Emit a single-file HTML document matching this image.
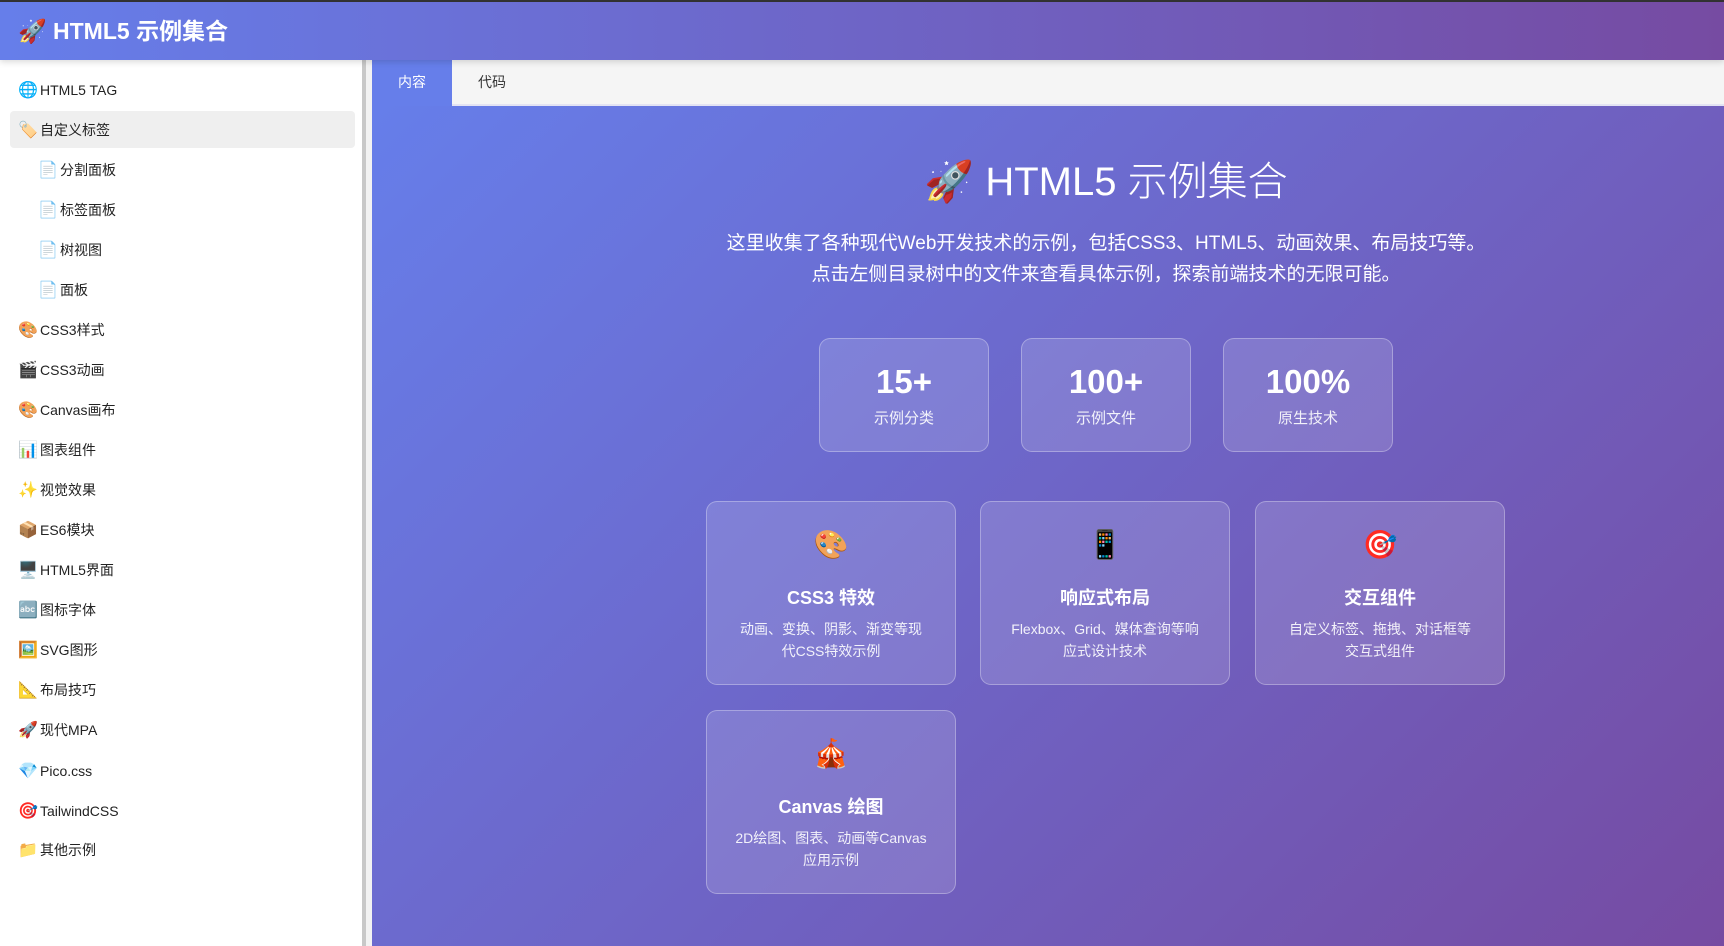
<!DOCTYPE html>
<html><head><meta charset="utf-8"><style>
*{box-sizing:border-box;margin:0;padding:0}
body{width:1724px;height:946px;overflow:hidden;font-family:"Liberation Sans","Noto Sans CJK SC",sans-serif;background:#fff;position:relative}
.top{position:absolute;left:0;top:0;width:1724px;height:2px;background:#333}
.hdr{position:absolute;left:0;top:2px;width:1724px;height:58px;background:linear-gradient(90deg,#667eea,#764ba2);color:#fff;font-weight:bold;font-size:23px;line-height:58px;padding-left:18px;box-shadow:0 2px 6px rgba(0,0,0,.15);z-index:2}
.side{position:absolute;left:0;top:60px;width:362px;height:886px;background:#fff}
.div{position:absolute;left:362px;top:60px;width:4px;height:886px;background:#c8c8c8}
.div2{position:absolute;left:366px;top:60px;width:6px;height:886px;background:#f2f2f2}
.it{position:absolute;left:18px;font-size:14px;color:#222;height:24px;line-height:24px;white-space:nowrap}
.it i{font-style:normal;display:inline-block;width:22px;font-size:16px}
.sel{position:absolute;left:10px;top:111px;width:345px;height:37px;background:#efefef;border-radius:4px}
.main{position:absolute;left:372px;top:106px;width:1352px;height:840px;background:linear-gradient(135deg,#667eea,#764ba2)}
.tabs{position:absolute;left:372px;top:60px;width:1352px;height:46px;background:#f5f5f5;border-bottom:2px solid #e3e3f3}
.tab{position:absolute;top:0;height:46px;line-height:44px;font-size:14px;text-align:center;width:80px}
.c{position:absolute;color:#fff;text-align:center}
.card{position:absolute;background:rgba(255,255,255,.14);border:1px solid rgba(255,255,255,.3);border-radius:11px;color:#fff;text-align:center}
.stat{width:170px;height:114px;top:338px}
.stat b{display:block;font-size:33px;margin-top:25px;line-height:36px}
.stat span{display:block;font-size:15px;margin-top:7px;opacity:.9}
.f{width:250px;height:184px}
.f .ic{font-size:28px;margin-top:26px;line-height:34px}
.f b{display:block;font-size:18px;margin-top:22px}
.f p{font-size:14px;line-height:22px;margin:8px 28px 0;opacity:.9}
</style></head><body>
<div class="top"></div>
<div class="hdr">🚀 HTML5 示例集合</div>
<div class="side">
<div class="sel" style="top:51px"></div>
</div>
<div class="it" style="top:78px"><i>🌐</i>HTML5 TAG</div>
<div class="it" style="top:118px"><i>🏷️</i>自定义标签</div>
<div class="it" style="top:158px;left:38px"><i>📄</i>分割面板</div>
<div class="it" style="top:198px;left:38px"><i>📄</i>标签面板</div>
<div class="it" style="top:238px;left:38px"><i>📄</i>树视图</div>
<div class="it" style="top:278px;left:38px"><i>📄</i>面板</div>
<div class="it" style="top:318px"><i>🎨</i>CSS3样式</div>
<div class="it" style="top:358px"><i>🎬</i>CSS3动画</div>
<div class="it" style="top:398px"><i>🎨</i>Canvas画布</div>
<div class="it" style="top:438px"><i>📊</i>图表组件</div>
<div class="it" style="top:478px"><i>✨</i>视觉效果</div>
<div class="it" style="top:518px"><i>📦</i>ES6模块</div>
<div class="it" style="top:558px"><i>🖥️</i>HTML5界面</div>
<div class="it" style="top:598px"><i>🔤</i>图标字体</div>
<div class="it" style="top:638px"><i>🖼️</i>SVG图形</div>
<div class="it" style="top:678px"><i>📐</i>布局技巧</div>
<div class="it" style="top:718px"><i>🚀</i>现代MPA</div>
<div class="it" style="top:759px"><i>💎</i>Pico.css</div>
<div class="it" style="top:799px"><i>🎯</i>TailwindCSS</div>
<div class="it" style="top:838px"><i>📁</i>其他示例</div>
<div class="div"></div><div class="div2"></div>
<div class="tabs">
<div class="tab" style="left:0;background:#667eea;color:#fff;height:46px">内容</div>
<div class="tab" style="left:80px;color:#333">代码</div>
</div>
<div class="main"></div>
<div class="c" style="left:706px;width:800px;top:157px;font-size:40px;font-weight:300;line-height:50px">🚀 HTML5 示例集合</div>
<div class="c" style="left:656px;width:900px;top:228px;font-size:19px;line-height:31px">这里收集了各种现代Web开发技术的示例，包括CSS3、HTML5、动画效果、布局技巧等。<br>点击左侧目录树中的文件来查看具体示例，探索前端技术的无限可能。</div>
<div class="card stat" style="left:819px"><b>15+</b><span>示例分类</span></div>
<div class="card stat" style="left:1021px"><b>100+</b><span>示例文件</span></div>
<div class="card stat" style="left:1223px"><b>100%</b><span>原生技术</span></div>
<div class="card f" style="left:706px;top:501px"><div class="ic">🎨</div><b>CSS3 特效</b><p>动画、变换、阴影、渐变等现代CSS特效示例</p></div>
<div class="card f" style="left:980px;top:501px"><div class="ic">📱</div><b>响应式布局</b><p>Flexbox、Grid、媒体查询等响应式设计技术</p></div>
<div class="card f" style="left:1255px;top:501px"><div class="ic">🎯</div><b>交互组件</b><p>自定义标签、拖拽、对话框等交互式组件</p></div>
<div class="card f" style="left:706px;top:710px"><div class="ic">🎪</div><b>Canvas 绘图</b><p>2D绘图、图表、动画等Canvas应用示例</p></div>
</body></html>
